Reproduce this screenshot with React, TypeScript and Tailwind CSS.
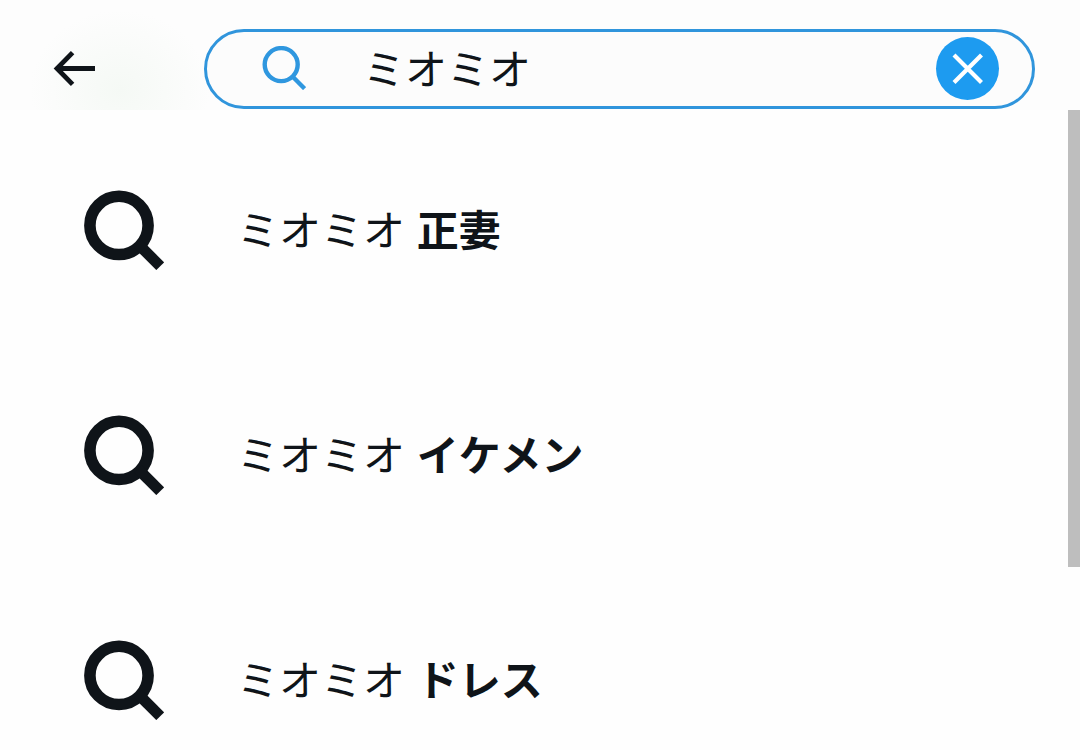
import React, { useState } from 'react';

interface Suggestion {
  query: string;
  completion: string;
}

const suggestions: Suggestion[] = [
  { query: 'ミオミオ', completion: '正妻' },
  { query: 'ミオミオ', completion: 'イケメン' },
  { query: 'ミオミオ', completion: 'ドレス' },
];

const BackIcon: React.FC = () => (
  <svg className="h-10 w-[42px]" viewBox="0 0 42 40" fill="none" stroke="currentColor" strokeWidth="4.8" aria-hidden="true">
    <path d="M19.6 3.6 4 19.5l15.6 15.9" />
    <path d="M5 19.5h37" />
  </svg>
);

const SearchIcon: React.FC = () => (
  <svg className="h-11 w-11 shrink-0 text-[#2f97df]" viewBox="0 0 44 44" fill="none" stroke="currentColor" strokeWidth="4.4" aria-hidden="true">
    <circle cx="19.2" cy="18.6" r="16.5" />
    <path d="M31 31l11.6 11.6" />
  </svg>
);

const BoldSearchIcon: React.FC = () => (
  <svg className="h-20 w-20 shrink-0" viewBox="0 0 80 80" fill="none" stroke="currentColor" strokeWidth="11.6" aria-hidden="true">
    <circle cx="35" cy="35.4" r="29.1" />
    <path d="M54 54l22.2 22.2" strokeWidth="11" />
  </svg>
);

const ClearIcon: React.FC = () => (
  <svg className="h-[63px] w-[63px]" viewBox="0 0 63 63" fill="none" stroke="currentColor" strokeWidth="4.2" aria-hidden="true">
    <path d="M18 18l27.5 27.5M45.5 18L18 45.5" />
  </svg>
);

const SuggestionRow: React.FC<{ suggestion: Suggestion }> = ({ suggestion }) => (
  <li>
    <button type="button" className="flex h-[225px] w-full items-center gap-[73px] pl-[84px] text-left text-[42px] leading-[60px]">
      <BoldSearchIcon />
      <span className="pt-1">
        {suggestion.query} <b className="font-bold">{suggestion.completion}</b>
      </span>
    </button>
  </li>
);

const App: React.FC = () => {
  const [text, setText] = useState('ミオミオ');

  return (
    <div className="flex h-screen flex-col overflow-hidden bg-[#fefefe] font-['Liberation_Sans','Noto_Sans_CJK_JP',sans-serif] text-[#0f1419]">
      <header className="flex shrink-0 items-center bg-[radial-gradient(ellipse_90px_80px_at_120px_90px,#f5f9f5,#fdfdfd)] pt-[29px] pr-[45px] pb-px pl-[53px]">
        <button type="button" aria-label="戻る" className="mr-[109px]">
          <BackIcon />
        </button>
        <form
          role="search"
          onSubmit={(e) => e.preventDefault()}
          className="flex h-20 min-w-0 flex-1 items-center rounded-full border-3 border-[#3095dc] bg-[#fcfcfc] pr-[33px] pb-0.5 pl-[55px]"
        >
          <SearchIcon />
          <input
            type="text"
            aria-label="検索"
            value={text}
            onChange={(e) => setText(e.target.value)}
            className="ml-[57px] min-w-0 flex-1 bg-transparent pt-1.5 text-[42px] leading-[60px] outline-none"
          />
          <button
            type="button"
            aria-label="クリア"
            onClick={() => setText('')}
            className="rounded-full bg-[#1d9bf0] text-white"
          >
            <ClearIcon />
          </button>
        </form>
      </header>
      <main className="flex min-h-0 flex-1">
        <ul className="flex-1 pt-[7px]">
          {suggestions.map((s) => (
            <SuggestionRow key={s.completion} suggestion={s} />
          ))}
        </ul>
        <div className="w-3">
          <div className="h-5/7 bg-[#bebebe]" />
        </div>
      </main>
    </div>
  );
};

export default App;
